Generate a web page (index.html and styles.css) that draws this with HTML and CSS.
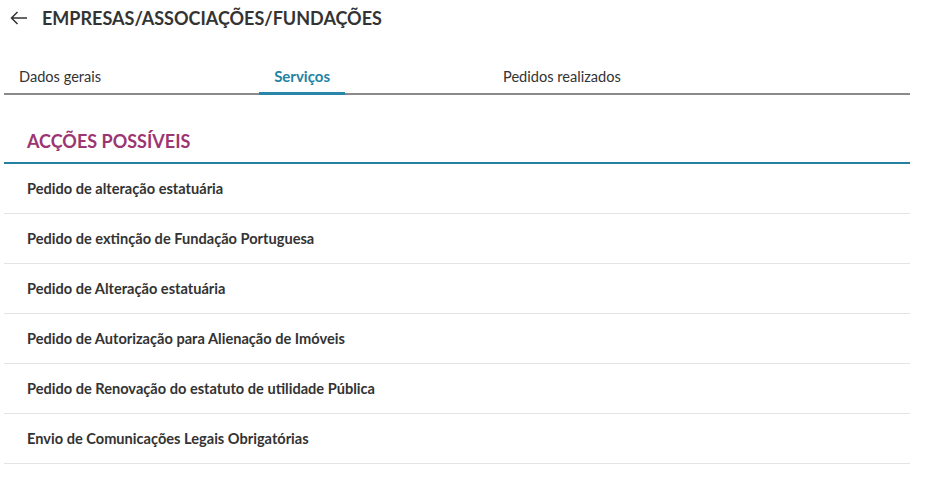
FILE: index.html
```html
<!DOCTYPE html>
<html lang="pt">
<head>
<meta charset="utf-8">
<title>Empresas/Associações/Fundações</title>
<link rel="stylesheet" href="styles.css">
</head>
<body>
<div class="page">
  <header class="header">
    <button class="back" aria-label="Voltar">
      <svg width="18" height="14" viewBox="0 0 18 14" fill="none" stroke="#333" stroke-width="1.5">
        <path d="M17 7H1.5M7.5 1L1.5 7l6 6"/>
      </svg>
    </button>
    <h1 class="title">EMPRESAS/ASSOCIAÇÕES/FUNDAÇÕES</h1>
  </header>
  <nav class="tabs">
    <div class="tab">Dados gerais</div>
    <div class="tab active">Serviços</div>
    <div class="tab">Pedidos realizados</div>
  </nav>
  <section class="section">
    <h2 class="section-title">ACÇÕES POSSÍVEIS</h2>
    <ul class="list">
      <li class="item">Pedido de alteração estatuária</li>
      <li class="item">Pedido de extinção de Fundação Portuguesa</li>
      <li class="item">Pedido de Alteração estatuária</li>
      <li class="item">Pedido de Autorização para Alienação de Imóveis</li>
      <li class="item">Pedido de Renovação do estatuto de utilidade Pública</li>
      <li class="item">Envio de Comunicações Legais Obrigatórias</li>
    </ul>
  </section>
</div>
</body>
</html>
```
FILE: styles.css
```css
* { box-sizing: border-box; }
html, body { margin: 0; padding: 0; background: #fff; }
body {
  font-family: Lato, "Open Sans", "Liberation Sans", sans-serif;
  color: #333;
}
.page {
  width: 906px;
  margin-left: 4px;
}
.header {
  display: flex;
  align-items: center;
  height: 36px;
  padding-left: 6px;
}
.back {
  border: 0;
  background: none;
  padding: 0;
  margin: 0;
  width: 18px;
  height: 14px;
  display: flex;
  margin-right: 14px;
  cursor: pointer;
}
.title {
  margin: 0;
  font-size: 18px;
  font-weight: 700;
  color: #333;
  letter-spacing: 0;
  line-height: 22px;
}
.tabs {
  display: flex;
  gap: 143px;
  margin-top: 23px;
  border-bottom: 2px solid #8a8a8a;
  height: 36px;
}
.tab {
  padding: 0 15px;
  font-size: 14.6px;
  line-height: 35px;
  color: #333;
  position: relative;
}
.tab.active {
  font-size: 15px;
  font-weight: 700;
  color: #2383a5;
}
.tab.active::after {
  content: "";
  position: absolute;
  left: 0;
  right: 0;
  bottom: -2px;
  height: 3px;
  background: #2a86a8;
}
.section {
  margin-top: 35px;
}
.section-title {
  margin: 0;
  padding-left: 23px;
  font-size: 18px;
  font-weight: 700;
  color: #9c3672;
  line-height: 22px;
  padding-bottom: 10px;
  border-bottom: 2px solid #2580a2;
}
.list {
  list-style: none;
  margin: 0;
  padding: 0;
}
.item {
  height: 50px;
  display: flex;
  align-items: center;
  padding-left: 23px;
  font-size: 14.6px;
  font-weight: 700;
  color: #333;
  border-bottom: 1px solid #e4e4e4;
}
```
